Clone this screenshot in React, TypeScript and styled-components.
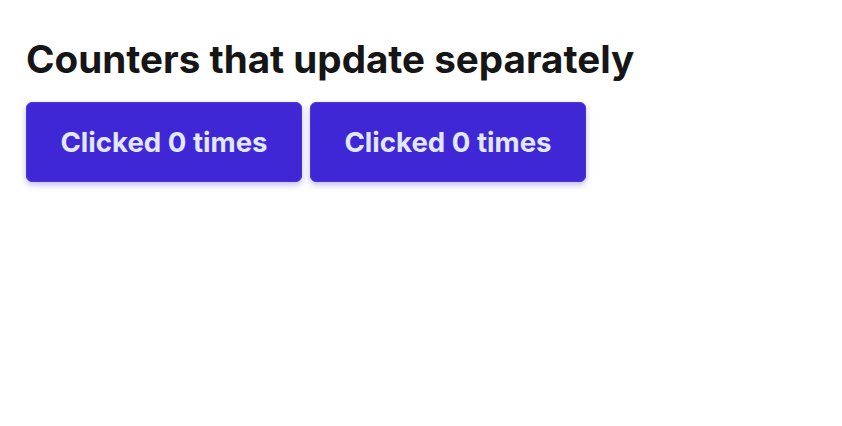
import React, { useState } from "react";
import styled, { createGlobalStyle } from "styled-components";

const Global = createGlobalStyle`
  html, body { margin: 0; padding: 0; background: #ffffff; }
  body { font-family: Inter, "Noto Sans", sans-serif; color: #171717; }
`;

const Page = styled.div`
  padding: 37px 26px;
`;

const Title = styled.h1`
  margin: 0 0 21px 0;
  font-size: 38.6px;
  font-weight: 700;
  line-height: 44px;
  letter-spacing: 0;
  color: #161616;
`;

const Row = styled.div`
  display: flex;
  gap: 8px;
`;

const CounterButton = styled.button`
  font-family: Inter, "Noto Sans", sans-serif;
  font-size: 27.6px;
  font-weight: 700;
  color: #e0e7ff;
  background: #3f27d6;
  border: 1px solid #4a33dc;
  border-radius: 6px;
  width: 276px;
  height: 80px;
  padding: 0;
  box-shadow: 0 3px 6px rgba(79, 70, 229, 0.35);
  cursor: pointer;
`;

function MyButton() {
  const [count, setCount] = useState(0);
  return <CounterButton onClick={() => setCount(count + 1)}>Clicked {count} times</CounterButton>;
}

export default function App() {
  return (
    <>
      <Global />
      <Page>
        <Title>Counters that update separately</Title>
        <Row>
          <MyButton />
          <MyButton />
        </Row>
      </Page>
    </>
  );
}
